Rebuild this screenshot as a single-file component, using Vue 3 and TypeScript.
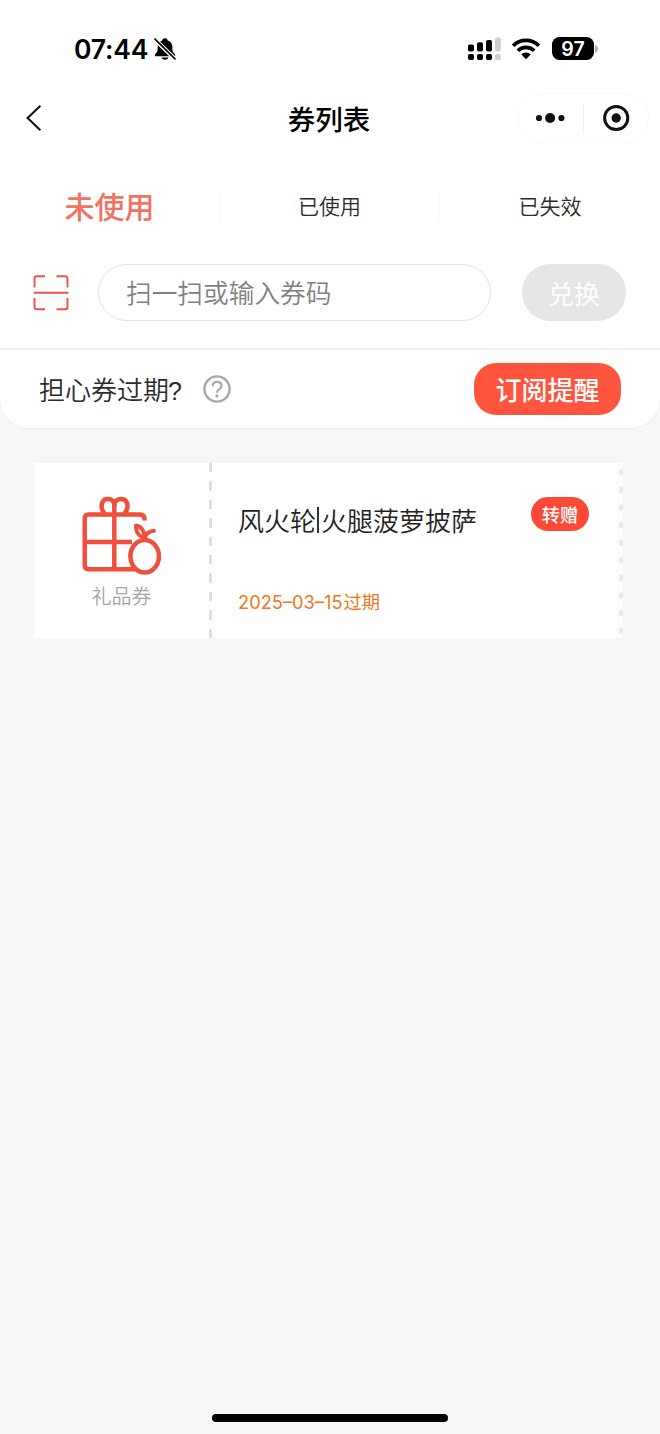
<script setup lang="ts">
import { ref } from 'vue'

interface Coupon {
  kind: string
  name: string
  date: string
}

const tabs: string[] = ['未使用', '已使用', '已失效']
const active = ref(0)
const code = ref('')
const coupons: Coupon[] = [{ kind: '礼品券', name: '火腿菠萝披萨', date: '2025–03–15' }]
const dots: number[] = Array.from({ length: 10 }, (_, i) => 9.3 + i * 17.6)
</script>

<template>
  <div class="page">
    <div class="panel">
      <header class="status">
        <div class="clock">
          <span class="time">07:44</span>
          <svg class="bell" width="24" height="24" viewBox="0 0 24 24">
            <path d="M12 1.200c-1.500 0-2.500.9-2.700 2.200C6.200 4.500 4.600 7 4.600 10v3.500c0 1.600-2.800 3.200-2.800 4.700 0 .7.500 1.100 1.300 1.100h17.800c.8 0 1.300-.4 1.300-1.100 0-1.500-2.800-3.100-2.800-4.700V10c0-3-1.600-5.500-4.700-6.600C14.500 2.100 13.500 1.200 12 1.200z" />
            <path d="M8.700 20.600h6.600c-.3 1.400-1.600 2.200-3.300 2.200s-3-.8-3.300-2.200z" />
            <path d="M2 2.600 22 22" stroke="#fff" stroke-width="4.200" />
            <path d="M2 2.200 22 21.800" stroke="#000" stroke-width="1.700" stroke-linecap="round" />
          </svg>
        </div>
        <div class="indicators">
          <svg width="33" height="24" viewBox="0 0 33 24">
            <g>
              <rect x="0" y="7.500" width="6" height="7" rx="1.800" />
              <rect x="9" y="5.200" width="6" height="9.300" rx="1.800" />
              <rect x="18" y="3" width="6" height="11.500" rx="1.800" />
              <rect x="0" y="17" width="6" height="6" rx="1.800" />
              <rect x="9" y="17" width="6" height="6" rx="1.800" />
              <rect x="18" y="17" width="6" height="6" rx="1.800" />
            </g>
            <g fill="#cecece">
              <rect x="27" y="0.500" width="5.800" height="14" rx="1.800" />
              <rect x="27" y="17" width="5.800" height="6" rx="1.800" />
            </g>
          </svg>
          <svg class="wifi" width="30" height="24" viewBox="0 0 30 24">
            <g fill="none" stroke="#000" stroke-width="3.700">
              <path d="M2.100 8.800a18.200 18.200 0 0 1 25.800 0" />
              <path d="M6.800 13.700a11.600 11.600 0 0 1 16.400 0" />
            </g>
            <path d="M10.300 17.400a6.700 6.700 0 0 1 9.400 0L15 22.200z" />
          </svg>
          <div class="battery">97</div>
          <svg class="cap" width="3" height="8" viewBox="0 0 3 8"><path d="M0 0c2 .8 3 2.200 3 4s-1 3.200-3 4z" fill="#aaa" /></svg>
        </div>
      </header>

      <nav class="navbar">
        <svg class="back" width="18" height="30" viewBox="0 0 18 30">
          <path d="M15.400 2.800 2.600 15l12.800 12.200" fill="none" stroke="#111" stroke-width="2.100" />
        </svg>
        <h1>券列表</h1>
        <div class="capsule">
          <svg class="more" width="66" height="48" viewBox="0 0 66 48">
            <circle cx="22" cy="24" r="3.100" /><circle cx="33.100" cy="24" r="5" /><circle cx="44.400" cy="24" r="3.100" />
          </svg>
          <i></i>
          <svg width="64" height="48" viewBox="0 0 64 48">
            <circle cx="32.200" cy="24" r="11.600" fill="none" stroke="#111" stroke-width="3" />
            <circle cx="32.200" cy="24" r="4.700" />
          </svg>
        </div>
      </nav>

      <div class="tabs">
        <button v-for="(tab, i) in tabs" :key="tab" :class="{ on: i === active }" @click="active = i">{{ tab }}</button>
      </div>

      <div class="redeem">
        <svg class="scan" width="36" height="36" viewBox="0 0 36 36">
          <g fill="none" stroke="#ef5346" stroke-width="1.900">
            <path d="M1.500 12.500V3.500Q1.500 1.200 3.800 1.200H12M23.500 1.200h8.700Q34.500 1.200 34.500 3.500v9M1.500 23v9q0 2.300 2.300 2.300H12M23.500 34.300h8.700q2.300 0 2.300-2.300v-9" />
            <path d="M0.800 17.700h34.700" />
          </g>
        </svg>
        <input v-model="code" placeholder="扫一扫或输入券码" />
        <button>兑换</button>
      </div>

      <div class="remind">
        <span class="worry">担心券过期<b>?</b></span>
        <svg class="help" width="28" height="28" viewBox="0 0 28 28">
          <circle cx="14" cy="14" r="12.600" fill="none" stroke="#a8a8a8" stroke-width="2.400" />
          <path d="M9.700 11.200c0-2.700 1.700-4.400 4.400-4.400 2.600 0 4.400 1.600 4.400 3.900 0 1.800-.9 2.700-2.400 3.700-1.400.9-2 1.600-2 3.300" fill="none" stroke="#a8a8a8" stroke-width="2.200" />
          <circle cx="14" cy="20.900" r="1.600" fill="#a8a8a8" />
        </svg>
        <button>订阅提醒</button>
      </div>
    </div>

    <main>
      <article v-for="coupon in coupons" :key="coupon.name" class="coupon">
        <div class="kind">
          <svg width="80" height="80" viewBox="0 0 80 80">
            <g fill="none" stroke="#f04f3c" stroke-width="4.500" stroke-linecap="round" stroke-linejoin="round">
              <path d="M63.500 25.500V23.500Q63 19.500 58.500 19.500H7.500Q3.700 19.500 3.700 23.300V70.300q0 4 4 4h47" stroke-linecap="butt" />
              <path d="M33.300 9V74.300M3.700 47H51" stroke-linecap="butt" />
              <path d="M24 19C19 14 19.500 5 26 4c4.300-.7 7.300 2.500 7.300 6 0-3.500 3.500-6.700 7.800-6 6.500 1 7 10 2 15" />
              <ellipse cx="63.700" cy="61.300" rx="14.300" ry="16.200" />
              <path d="M63 43c-7-2.500-8.500-7-8-12.500 5.500 1.200 9 5.500 8 12.500zM64 42.500c1-4 4-6.200 9-6.800" stroke-width="3.900" />
            </g>
          </svg>
          <span>{{ coupon.kind }}</span>
        </div>
        <div class="detail">
          <div class="text">
            <h2><span>风火轮</span><i></i><span>{{ coupon.name }}</span></h2>
            <p><span class="date">{{ coupon.date }}</span>过期</p>
          </div>
          <button>转赠</button>
        </div>
        <svg class="edge" width="5" height="175" viewBox="0 0 5 175">
          <ellipse v-for="y in dots" :key="y" cx="3" :cy="y" rx="2.300" ry="3.500" fill="#ebebeb" />
        </svg>
      </article>
    </main>
    <footer><span></span></footer>
  </div>
</template>

<style>
body { background: #f7f7f7; }
</style>

<style scoped>
* { box-sizing: border-box; }
.page {
  width: 660px;
  height: 1434px;
  display: flex;
  flex-direction: column;
  background: #f7f7f7;
  color: #2b2b2b;
  font-family: "Noto Sans CJK SC", sans-serif;
  overflow: hidden;
}
h1, h2, p { margin: 0; }
button { border: 0; padding: 0; margin: 0; font-family: inherit; display: block; }
svg { display: block; flex: none; }
.panel {
  height: 428px;
  background: #fff;
  border-radius: 0 0 30px 30px;
  box-shadow: 0 1px 2px #eee;
}
.status { height: 90px; display: flex; justify-content: space-between; padding: 36px 62px 0 74px; }
.clock { display: flex; height: 26px; align-items: center; }
.time { font: 600 26.500px/26px Inter, sans-serif; width: 79px; letter-spacing: -0.15px; white-space: nowrap; color: #000; }
.indicators { display: flex; height: 25px; align-items: center; }
.wifi { margin-left: 10px; }
.battery {
  margin-left: 11px;
  width: 42px;
  height: 23px;
  border-radius: 7.500px;
  background: #000;
  color: #fff;
  font: 600 19.500px/24px Inter, sans-serif;
  text-align: center;
}
.cap { margin-left: 1px; }
.navbar { height: 56px; display: grid; grid-template-columns: 140px 1fr 140px; align-items: center; }
.back { margin-left: 25px; }
h1 { font-size: 27.500px; line-height: 40px; font-weight: 500; color: #000; text-align: center; margin-left: -2px; }
.capsule { width: 132px; height: 50px; border: 1px solid #f8f8f8; border-radius: 25px; display: flex; align-items: center; margin-left: -3px; fill: #111; }
.capsule i { width: 1px; height: 30px; background: #f1f1f1; }
.more { margin-left: -1px; }
.tabs { margin-top: 35px; height: 48px; display: grid; grid-template-columns: repeat(3, 220px); align-items: center; }
.tabs button { background: none; height: 30px; font-size: 21px; line-height: 28px; color: #2b2b2b; border-right: 1px solid #f8f8f8; font-weight: 350; }
.tabs button:last-child { border-right: 0; }
.tabs .on { color: #f27360; font-size: 30px; font-weight: 500; }
.redeem { height: 120px; display: flex; align-items: center; padding: 7px 34px 0 33px; border-bottom: 2px solid #f3f3f3; margin-top: 1px; }
.redeem input {
  margin-left: 29px;
  width: 393px;
  height: 57px;
  border: 1px solid #e3e3e3;
  border-radius: 29px;
  padding: 0 28px 2px 27px;
  background: #fff;
  font-family: inherit;
  font-size: 25.700px;
  font-weight: 350;
}
.redeem input::placeholder { color: #808080; opacity: 1; }
.redeem button { margin-left: auto; width: 104px; height: 57px; border-radius: 29px; background: #e6e6e6; color: #fff; font-size: 26px; line-height: 56px; }
.remind { height: 77px; display: flex; align-items: center; padding: 0 39px 0 39px; }
.worry { font-size: 26px; line-height: 38px; white-space: nowrap; width: 144px; padding-top: 1px; font-weight: 350; }
.worry b { font: 400 25px/30px "Liberation Sans", sans-serif; margin-left: -1px; }
.help { margin-left: 20px; }
.remind button { margin-left: auto; width: 147px; height: 52px; border-radius: 22px; background: #ff543e; color: #fff; font-size: 26px; font-weight: 500; line-height: 50px; }
main { flex: 1; padding: 35px 37px 0 34px; }
.coupon { height: 175px; background: #fff; display: flex; }
.kind { width: 175px; padding-top: 32px; display: flex; flex-direction: column; align-items: center; }
.kind svg { margin-right: 2px; }
.kind span { font-size: 20px; line-height: 28px; color: #a5a5a5; margin-top: 7px; font-weight: 350; }
.detail {
  flex: 1;
  display: flex;
  justify-content: space-between;
  padding: 34px 29px 0 29px;
  background: repeating-linear-gradient(to bottom, #dedede 0 9.400px, transparent 9.400px 18.400px) left top / 3px 100% no-repeat;
}
h2 { display: flex; align-items: center; height: 46px; font-size: 26px; line-height: 38px; font-weight: 350; color: #222; white-space: nowrap; }
h2 i { width: 2px; height: 26px; background: #333; margin: 0 2px 0 1px; }
p { margin-top: 44px; font-size: 18.300px; line-height: 28px; color: #f17621; white-space: nowrap; display: flex; }
.date { font-family: Inter, sans-serif; font-size: 18.300px; width: 105.500px; padding-top: 1px; }
.detail button { width: 58px; height: 34px; border-radius: 17px; background: #fc4937; color: #fff; font-size: 18.300px; font-weight: 500; line-height: 32px; }
footer { height: 20px; display: flex; justify-content: center; }
footer span { width: 236px; height: 8px; border-radius: 4px; background: #000; }
</style>
